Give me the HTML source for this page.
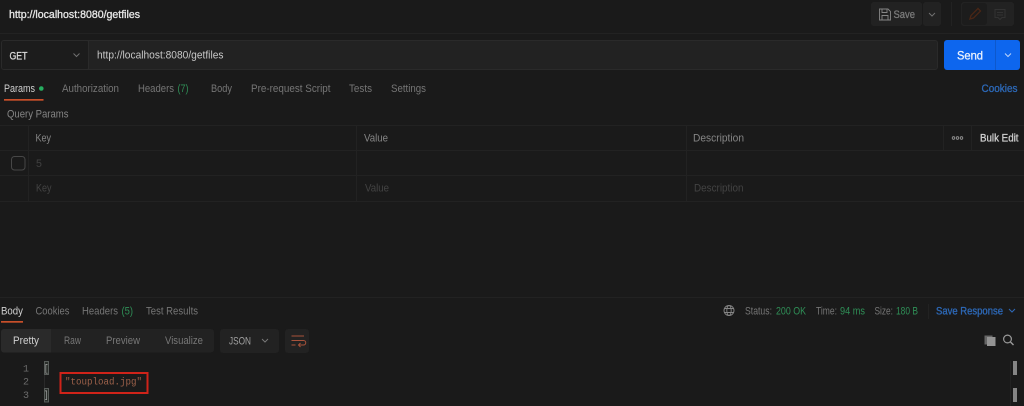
<!DOCTYPE html>
<html><head><meta charset="utf-8">
<style>
html,body{margin:0;padding:0;background:#1a1a1a;width:1024px;height:406px;overflow:hidden}
svg{display:block}
text{font-family:"Liberation Sans",sans-serif;font-size:10.6px}
text.s{stroke-width:.3px}
text.m{font-family:"Liberation Mono",monospace;font-size:10px}
</style></head><body>
<svg width="1024" height="406" viewBox="0 0 1024 406" xmlns="http://www.w3.org/2000/svg">
<defs><filter id="b" x="-5%" y="-5%" width="110%" height="110%"><feGaussianBlur stdDeviation="0.35"/></filter></defs>
<rect width="1024" height="406" fill="#1a1a1a"/>
<g filter="url(#b)">
<!-- header -->
<text class="s" stroke="#e6e6e6" x="9" y="18" fill="#e6e6e6" textLength="131" lengthAdjust="spacingAndGlyphs">http://localhost:8080/getfiles</text>
<rect x="0" y="33" width="1024" height="1" fill="#202020"/>
<rect x="871" y="2" width="51" height="24" rx="3" fill="#222"/>
<path d="M879.500 9h8.500l2.500 2.500v8.500h-11zM882 9v3.500h5v-3.500M882 20v-4.500h6v4.500" fill="none" stroke="#858585" stroke-width="0.900"/>
<text class="s" stroke="#7a7a7a" x="893.500" y="18" fill="#7a7a7a" style="font-size:11px" textLength="21.500" lengthAdjust="spacingAndGlyphs">Save</text>
<rect x="923" y="2" width="18" height="24" rx="3" fill="#222"/>
<path d="M929 13l3 3 3-3" fill="none" stroke="#6f6f6f" stroke-width="1"/>
<rect x="951" y="2" width="1" height="24" fill="#222"/>
<rect x="961" y="2" width="53" height="24" rx="3" fill="#222"/>
<rect x="962" y="3" width="25" height="22" rx="3" fill="#1a1a1a"/>
<path d="M970 19l1-3.500 7-7 2.500 2.500-7 7z" fill="none" stroke="#4a2619" stroke-width="1.400"/>
<path d="M995 9.500h10v8h-3l-2 2-2-2h-3z" fill="none" stroke="#333" stroke-width="1"/>
<path d="M997 12.500h6M997 15h6" stroke="#333" stroke-width="1"/>

<!-- url bar -->
<rect x="1.500" y="40.500" width="936" height="29" rx="2.500" fill="#212121" stroke="#2a2a2a"/>
<rect x="2" y="41" width="86" height="28" rx="2" fill="#1c1c1c"/>
<rect x="88" y="41" width="1" height="28" fill="#2a2a2a"/>
<text class="s" stroke="#d8d8d8" x="9.500" y="59.500" fill="#d8d8d8" style="font-size:11px" textLength="18" lengthAdjust="spacingAndGlyphs">GET</text>
<path d="M73.500 53.500l3 3 3-3" fill="none" stroke="#707070" stroke-width="1"/>
<text x="97" y="58.500" fill="#c8c8c8" textLength="126.500" lengthAdjust="spacingAndGlyphs">http://localhost:8080/getfiles</text>
<rect x="944" y="40" width="76" height="30" rx="3" fill="#0d66ee"/>
<rect x="995" y="40" width="1" height="30" fill="#0b58cc"/>
<text class="s" stroke="#e9f1fd" x="957" y="59.500" fill="#e9f1fd" style="font-size:12px" textLength="26" lengthAdjust="spacingAndGlyphs">Send</text>
<path d="M1005 53.500l3 3 3-3" fill="none" stroke="#bcd4fa" stroke-width="1"/>

<!-- request tabs -->
<text x="4" y="92" fill="#cfcfcf" textLength="31" lengthAdjust="spacingAndGlyphs">Params</text>
<circle cx="41.300" cy="88.500" r="2.300" fill="#27ae60"/>
<rect x="4" y="99" width="39.500" height="1.700" fill="#c8502c"/>
<g fill="#757575">
<text x="62" y="92" textLength="57" lengthAdjust="spacingAndGlyphs">Authorization</text>
<text x="138" y="92" textLength="36" lengthAdjust="spacingAndGlyphs">Headers</text>
<text x="211" y="92" textLength="21" lengthAdjust="spacingAndGlyphs">Body</text>
<text x="251" y="92" textLength="79.500" lengthAdjust="spacingAndGlyphs">Pre-request Script</text>
<text x="349" y="92" textLength="23" lengthAdjust="spacingAndGlyphs">Tests</text>
<text x="391" y="92" textLength="35" lengthAdjust="spacingAndGlyphs">Settings</text>
<text x="7" y="117.500" textLength="61.500" lengthAdjust="spacingAndGlyphs" fill="#858585">Query Params</text>
</g>
<text x="177.500" y="92" fill="#2f8f57" textLength="11" lengthAdjust="spacingAndGlyphs">(7)</text>
<text class="s" stroke="#2d69b8" x="981.500" y="92" fill="#2d69b8" textLength="36" lengthAdjust="spacingAndGlyphs">Cookies</text>

<!-- params table -->
<g fill="#232323">
<rect x="0" y="125" width="1024" height="1"/>
<rect x="0" y="150" width="1024" height="1"/>
<rect x="0" y="175" width="1024" height="1"/>
<rect x="0" y="201" width="1024" height="1"/>
<rect x="28" y="125" width="1" height="76"/>
<rect x="356" y="125" width="1" height="76"/>
<rect x="686" y="125" width="1" height="76"/>
<rect x="943" y="125" width="1" height="25"/>
<rect x="971" y="125" width="1" height="25"/>
</g>
<g fill="#858585">
<text x="35.500" y="141.500" textLength="15.500" lengthAdjust="spacingAndGlyphs">Key</text>
<text x="364" y="141.500" textLength="24" lengthAdjust="spacingAndGlyphs">Value</text>
<text x="693" y="141.500" textLength="51" lengthAdjust="spacingAndGlyphs">Description</text>
</g>
<g fill="none" stroke="#9a9a9a" stroke-width="0.800"><circle cx="953.500" cy="138" r="1.300"/><circle cx="957.500" cy="138" r="1.300"/><circle cx="961.500" cy="138" r="1.300"/></g>
<text class="s" stroke="#cdcdcd" x="980" y="141.500" fill="#cdcdcd" textLength="38.500" lengthAdjust="spacingAndGlyphs">Bulk Edit</text>
<rect x="11.500" y="156.500" width="13.500" height="13.500" rx="3" fill="none" stroke="#464646"/>
<text x="36" y="167" fill="#404040">5</text>
<g fill="#434343">
<text x="36" y="191.500" textLength="15.500" lengthAdjust="spacingAndGlyphs">Key</text>
<text x="365" y="191.500" textLength="24" lengthAdjust="spacingAndGlyphs">Value</text>
<text x="694" y="191.500" textLength="49.500" lengthAdjust="spacingAndGlyphs">Description</text>
</g>

<!-- response -->
<rect x="0" y="297" width="1024" height="1" fill="#202020"/>
<text x="1" y="314.500" fill="#cfcfcf" textLength="22" lengthAdjust="spacingAndGlyphs">Body</text>
<rect x="1" y="321" width="22" height="1.700" fill="#c8502c"/>
<g fill="#757575">
<text x="35.500" y="314.500" textLength="34" lengthAdjust="spacingAndGlyphs">Cookies</text>
<text x="82" y="314.500" textLength="36" lengthAdjust="spacingAndGlyphs">Headers</text>
<text x="146" y="314.500" textLength="52" lengthAdjust="spacingAndGlyphs">Test Results</text>
<text x="745" y="314.500" textLength="27" lengthAdjust="spacingAndGlyphs">Status:</text>
<text x="816" y="314.500" textLength="21" lengthAdjust="spacingAndGlyphs">Time:</text>
<text x="874.500" y="314.500" textLength="18.500" lengthAdjust="spacingAndGlyphs">Size:</text>
</g>
<text x="121.500" y="314.500" fill="#2f8f57" textLength="11.500" lengthAdjust="spacingAndGlyphs">(5)</text>
<g fill="#2f8f57">
<text x="776" y="314.500" textLength="30" lengthAdjust="spacingAndGlyphs">200 OK</text>
<text x="840" y="314.500" textLength="25" lengthAdjust="spacingAndGlyphs">94 ms</text>
<text x="896" y="314.500" textLength="22" lengthAdjust="spacingAndGlyphs">180 B</text>
</g>
<g fill="none" stroke="#858585" stroke-width="0.900">
<circle cx="729" cy="310.500" r="5"/><ellipse cx="729" cy="310.500" rx="2.200" ry="5"/><path d="M724 308.500h10M724 312.500h10"/>
</g>
<rect x="928" y="304" width="1" height="15" fill="#212121"/>
<text class="s" stroke="#2d69b8" x="936" y="314.500" fill="#2d69b8" textLength="67" lengthAdjust="spacingAndGlyphs">Save Response</text>
<path d="M1009 309l3 3 3-3" fill="none" stroke="#2d69b8" stroke-width="1"/>

<rect x="1" y="329" width="213" height="23.500" rx="3" fill="#202020"/>
<path d="M4 329h47v23.500h-47a3 3 0 0 1-3-3v-17.500a3 3 0 0 1 3-3z" fill="#2c2c2c"/>
<text x="13" y="344" fill="#d0d0d0" textLength="26" lengthAdjust="spacingAndGlyphs">Pretty</text>
<g fill="#787878">
<text x="64" y="344" textLength="17" lengthAdjust="spacingAndGlyphs">Raw</text>
<text x="106" y="344" textLength="34" lengthAdjust="spacingAndGlyphs">Preview</text>
<text x="165" y="344" textLength="38" lengthAdjust="spacingAndGlyphs">Visualize</text>
</g>
<rect x="220" y="329" width="59" height="24" rx="3" fill="#202020"/>
<text x="229" y="344.500" fill="#a0a0a0" textLength="22" lengthAdjust="spacingAndGlyphs">JSON</text>
<path d="M262 339l3 3 3-3" fill="none" stroke="#787878" stroke-width="1"/>
<rect x="285" y="329" width="24" height="24" rx="3" fill="#202020"/>
<path d="M291.500 336h12.500M291.500 340.500h12a2 2 0 0 1 0 4.500h-4M291.500 345h4" fill="none" stroke="#a8523a" stroke-width="1"/>
<path d="M300.500 343l-2 2 2 2" fill="none" stroke="#a8523a" stroke-width="1"/>

<path d="M984.500 335.500h8v2h-5v7h-3z" fill="#666"/>
<rect x="987" y="337" width="8.500" height="9" fill="#939393"/>
<circle cx="1007.500" cy="339" r="3.900" fill="none" stroke="#9a9a9a" stroke-width="1.200"/>
<path d="M1010.500 342l3 3" stroke="#9a9a9a" stroke-width="1.400"/>

<rect x="1010" y="361" width="1" height="45" fill="#222"/>
<rect x="1013" y="361" width="4" height="14" fill="#858585"/>
<rect x="1013" y="388" width="4" height="14" fill="#858585"/>

<!-- code -->
<text class="m" x="23" y="371.500" fill="#6a6a6a">1</text>
<text class="m" x="23" y="384.500" fill="#6a6a6a">2</text>
<text class="m" x="23" y="398" fill="#6a6a6a">3</text>
<rect x="44" y="375" width="1" height="13" fill="#2a2a2a"/>
<rect x="44.500" y="361.500" width="4" height="13" fill="#2a2f2c" stroke="#666b68" stroke-width="0.800"/>
<rect x="44.500" y="388.500" width="4" height="13.500" fill="#2a2f2c" stroke="#666b68" stroke-width="0.800"/>
<text class="m" x="44" y="371.500" fill="#a8a8a8" textLength="4.500" lengthAdjust="spacingAndGlyphs">[</text>
<text class="m" x="44" y="398" fill="#a8a8a8" textLength="4.500" lengthAdjust="spacingAndGlyphs">]</text>
<text class="m" x="65" y="384.500" fill="#9c6049" textLength="77" lengthAdjust="spacingAndGlyphs">"toupload.jpg"</text>
</g>
<rect x="60.500" y="373" width="87" height="20" fill="none" stroke="#cf2319" stroke-width="2"/>
</svg>
</body></html>
